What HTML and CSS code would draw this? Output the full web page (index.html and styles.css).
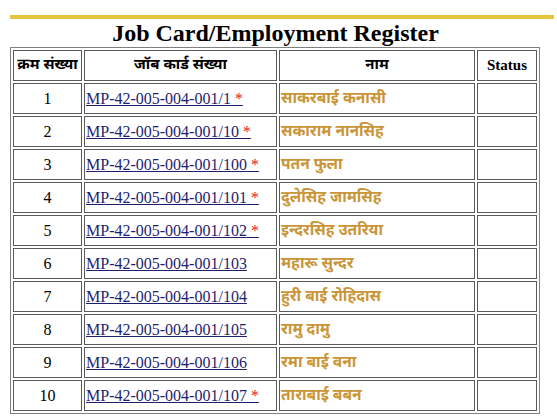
FILE: index.html
```html
<!DOCTYPE html>
<html>
<head>
<meta charset="utf-8">
<title>Job Card/Employment Register</title>
<link rel="stylesheet" href="styles.css">
</head>
<body>
<div class="page">
  <div class="rule"></div>
  <h1 class="title">Job Card/Employment Register</h1>
  <table class="register">
    <colgroup>
      <col class="c1"><col class="c2"><col class="c3"><col class="c4">
    </colgroup>
    <thead>
      <tr>
        <th class="hi">क्रम संख्या</th>
        <th class="hi">जॉब कार्ड संख्या</th>
        <th class="hi">नाम</th>
        <th class="en">Status</th>
      </tr>
    </thead>
    <tbody>
      <tr><td class="num">1</td><td><a href="#">MP-42-005-004-001/1<span class="star"> *</span></a></td><td class="name">साकरबाई कनासी</td><td></td></tr>
      <tr><td class="num">2</td><td><a href="#">MP-42-005-004-001/10<span class="star"> *</span></a></td><td class="name">सकाराम नानसिह</td><td></td></tr>
      <tr><td class="num">3</td><td><a href="#">MP-42-005-004-001/100<span class="star"> *</span></a></td><td class="name">पतन फुला</td><td></td></tr>
      <tr><td class="num">4</td><td><a href="#">MP-42-005-004-001/101<span class="star"> *</span></a></td><td class="name">दुलेसिह जामसिह</td><td></td></tr>
      <tr><td class="num">5</td><td><a href="#">MP-42-005-004-001/102<span class="star"> *</span></a></td><td class="name">इन्दरसिह उतरिया</td><td></td></tr>
      <tr><td class="num">6</td><td><a href="#">MP-42-005-004-001/103</a></td><td class="name">महारू सुन्दर</td><td></td></tr>
      <tr><td class="num">7</td><td><a href="#">MP-42-005-004-001/104</a></td><td class="name">हुरी बाई रोहिदास</td><td></td></tr>
      <tr><td class="num">8</td><td><a href="#">MP-42-005-004-001/105</a></td><td class="name">रामु दामु</td><td></td></tr>
      <tr><td class="num">9</td><td><a href="#">MP-42-005-004-001/106</a></td><td class="name">रमा बाई वना</td><td></td></tr>
      <tr><td class="num">10</td><td><a href="#">MP-42-005-004-001/107<span class="star"> *</span></a></td><td class="name">ताराबाई बबन</td><td></td></tr>
    </tbody>
  </table>
</div>
</body>
</html>
```

FILE: styles.css
```css
html, body {
  margin: 0;
  padding: 0;
  background: #ffffff;
}
.page {
  padding: 15px 0 0 10px;
}
.rule {
  width: 544px;
  height: 4px;
  background: #e5c53e;
}
.title {
  width: 531px;
  margin: 0;
  height: 28px;
  line-height: 29px;
  text-align: center;
  font-family: "Liberation Serif", "Times New Roman", serif;
  font-weight: bold;
  font-size: 24px;
  color: #000;
}
.register {
  border-collapse: separate;
  border-spacing: 2px;
  border: 1px solid #808080;
  table-layout: fixed;
  font-family: "Liberation Serif", "Times New Roman", serif;
  font-size: 16px;
}
.c1 { width: 69px; }
.c2 { width: 193px; }
.c3 { width: 196px; }
.c4 { width: 60px; }
.register th,
.register td {
  border: 1px solid #5a5a5a;
  height: 29px;
  padding: 0 1px;
  white-space: nowrap;
  overflow: hidden;
}
.register th {
  text-align: center;
  font-weight: bold;
  color: #000;
}
.register th.hi {
  font-family: "Noto Sans Devanagari", "Lohit Devanagari", "Noto Sans", "Mangal", sans-serif;
  font-size: 15px;
}
.register th.en {
  font-family: "Liberation Serif", "Times New Roman", serif;
  font-size: 15px;
}
.register td {
  text-align: left;
  color: #000;
}
.register td.num {
  text-align: center;
}
.register a {
  color: #1e1e6e;
  text-decoration: underline;
}
.register .star {
  color: #e02020;
}
.register td.name {
  font-family: "Noto Sans Devanagari", "Lohit Devanagari", "Noto Sans", "Mangal", sans-serif;
  font-weight: bold;
  font-size: 15.5px;
  color: #c99536;
}
```
